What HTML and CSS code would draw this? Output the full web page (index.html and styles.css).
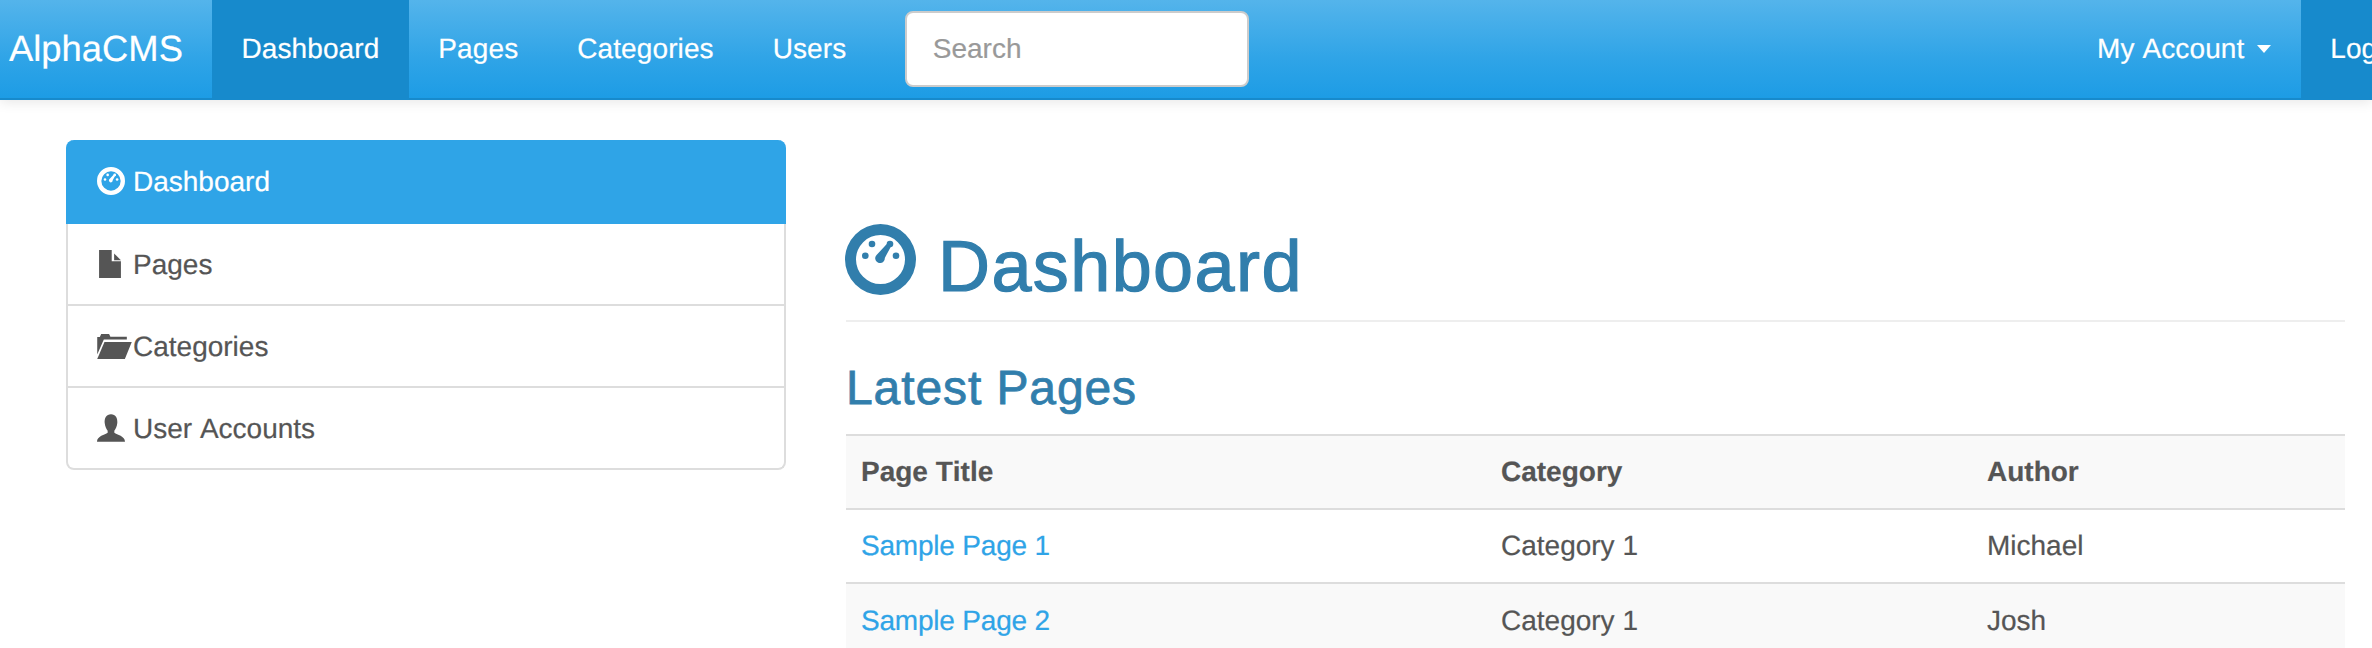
FILE: index.html
```html
<!DOCTYPE html>
<html lang="en">
<head>
    <meta charset="UTF-8">
    <title>AlphaCMS</title>
    <link rel="stylesheet" href="styles.css">
</head>
<body>

    <svg class="sprites" width="0" height="0">
        <symbol id="icon-dashboard" viewBox="0 0 71 71">
            <path fill-rule="evenodd" d="M35.5 0a35.5 35.5 0 1 0 0 71a35.5 35.5 0 1 0 0-71zM35.5 11a24.5 24.5 0 1 1 0 49a24.5 24.5 0 1 1 0-49z"/>
            <circle cx="27" cy="20" r="3.3"/>
            <circle cx="45" cy="20" r="3.3"/>
            <circle cx="20.3" cy="31.7" r="3.3"/>
            <circle cx="51" cy="31.7" r="3.3"/>
            <path d="M43.2 18.5l3.6 2.4l-7 13a4.8 4.8 0 1 1-8-3.2z"/>
        </symbol>
        <symbol id="icon-file" viewBox="0 0 64 82">
            <path d="M0 0H37V33H64V82H0Z"/>
            <path d="M44 10L64 30H44Z"/>
        </symbol>
        <symbol id="icon-folder" viewBox="0 0 105 76">
            <path d="M0 62V9H8L12 0H36L40 8H90V17H20Z"/>
            <path d="M22 24H105L84 76H0Z"/>
        </symbol>
        <symbol id="icon-user" viewBox="0 0 84 83">
            <path d="M42 0C56 0 62 12 61 26C60 38 55 46 52 50V56C60 62 84 66 84 83H0C0 66 24 62 32 56V50C29 46 24 38 23 26C22 12 28 0 42 0Z"/>
        </symbol>
    </svg>

    <nav class="navbar">
        <a class="brand" href="#">AlphaCMS</a>
        <a class="nav-link active" href="#">Dashboard</a>
        <a class="nav-link" href="#">Pages</a>
        <a class="nav-link" href="#">Categories</a>
        <a class="nav-link" href="#">Users</a>
        <input class="search" type="text" placeholder="Search">
        <div class="nav-right">
            <a class="nav-link" href="#">My Account <span class="caret"></span></a>
            <a class="nav-link active" href="#">Logout</a>
        </div>
    </nav>

    <div class="page">
        <aside class="sidebar">
            <a class="side-item active" href="#">
                <span class="side-icon"><svg class="ico-dash"><use href="#icon-dashboard"/></svg></span>Dashboard
            </a>
            <a class="side-item" href="#">
                <span class="side-icon"><svg class="ico-file"><use href="#icon-file"/></svg></span>Pages
            </a>
            <a class="side-item" href="#">
                <span class="side-icon"><svg class="ico-folder"><use href="#icon-folder"/></svg></span>Categories
            </a>
            <a class="side-item" href="#">
                <span class="side-icon"><svg class="ico-user"><use href="#icon-user"/></svg></span>User Accounts
            </a>
        </aside>

        <main class="content">
            <h1 class="page-title"><svg class="ico-title"><use href="#icon-dashboard"/></svg>Dashboard</h1>
            <h2 class="section-title">Latest Pages</h2>
            <table class="table">
                <thead>
                    <tr>
                        <th class="col-title">Page Title</th>
                        <th class="col-category">Category</th>
                        <th>Author</th>
                    </tr>
                </thead>
                <tbody>
                    <tr>
                        <td><a href="#">Sample Page 1</a></td>
                        <td>Category 1</td>
                        <td>Michael</td>
                    </tr>
                    <tr class="striped">
                        <td><a href="#">Sample Page 2</a></td>
                        <td>Category 1</td>
                        <td>Josh</td>
                    </tr>
                </tbody>
            </table>
        </main>
    </div>

</body>
</html>
```

FILE: styles.css
```css
html, body {
    margin: 0;
    height: 648px;
    overflow: hidden;
}
body {
    font-family: "Liberation Sans", Arial, sans-serif;
    font-size: 28px;
    font-kerning: none;
    text-rendering: geometricPrecision;
    -webkit-text-stroke: 0.2px;
    color: #555;
    background: #fff;
}
a {
    text-decoration: none;
    color: #2fa4e7;
}
.sprites {
    position: absolute;
}
svg {
    fill: currentColor;
    display: block;
}

/* navbar */
.navbar {
    display: flex;
    align-items: center;
    box-sizing: border-box;
    height: 100px;
    border-bottom: 2px solid #178acc;
    background: linear-gradient(#54b4eb, #2fa4e7 60%, #1d9ce5);
    box-shadow: 0 2px 12px rgba(0, 0, 0, 0.1);
}
.brand {
    flex-shrink: 0;
    padding: 0 29px 0 9px;
    font-size: 36.4px;
    color: #fff;
}
.nav-link {
    display: flex;
    align-items: center;
    flex-shrink: 0;
    height: 100px;
    padding: 0 29.5px;
    letter-spacing: 0.1px;
    color: #fff;
    white-space: pre;
}
.nav-link.active {
    background: #178acc;
}
.search {
    flex-shrink: 0;
    box-sizing: border-box;
    width: 344px;
    height: 76px;
    margin-left: 29px;
    padding: 0 26px;
    border: 2px solid #ccc;
    border-radius: 8px;
    background: #fff;
    font: inherit;
    color: #555;
}
.search::placeholder {
    color: #999;
}
.nav-right {
    display: flex;
    flex-shrink: 0;
    margin-left: auto;
    margin-right: -74px;
}
.caret {
    width: 0;
    height: 0;
    margin-left: 5px;
    border-top: 8px solid #fff;
    border-left: 7.5px solid transparent;
    border-right: 7.5px solid transparent;
}

/* page */
.page {
    display: flex;
    align-items: flex-start;
    gap: 60px;
    padding: 40px 27px 0 66px;
}
.sidebar {
    flex: 0 0 720px;
}
.side-item {
    display: flex;
    align-items: center;
    box-sizing: border-box;
    height: 82px;
    padding: 2px 0 0 29px;
    border: 2px solid #ddd;
    border-top: 0;
    color: #555;
}
.side-item:last-child {
    border-radius: 0 0 8px 8px;
}
.side-item.active {
    height: 84px;
    border-color: #2fa4e7;
    border-radius: 8px 8px 0 0;
    background: #2fa4e7;
    color: #fff;
}
.side-icon {
    display: flex;
    flex: 0 0 36px;
    margin-top: -2px;
}
.ico-dash {
    width: 28px;
    height: 28px;
}
.ico-file {
    width: 22px;
    height: 28px;
    margin-left: 2px;
}
.ico-folder {
    width: 35px;
    height: 25px;
}
.ico-user {
    width: 28px;
    height: 28px;
}

/* content */
.content {
    flex: 1;
    min-width: 0;
}
.page-title {
    display: flex;
    align-items: center;
    gap: 22px;
    height: 182px;
    box-sizing: border-box;
    margin: 0;
    padding-top: 74px;
    border-bottom: 2px solid #eee;
    font-size: 72px;
    font-weight: 400;
    letter-spacing: 1.4px;
    -webkit-text-stroke: 1.2px;
    color: #317eac;
}
.ico-title {
    width: 71px;
    height: 71px;
    margin: -15px 0 0 -1px;
}
.section-title {
    margin: 40px 0 18px;
    font-size: 48px;
    line-height: 54px;
    font-weight: 400;
    letter-spacing: 0.9px;
    -webkit-text-stroke: 0.8px;
    color: #317eac;
}
.table {
    width: 100%;
    border-collapse: collapse;
    table-layout: fixed;
}
.table th, .table td {
    height: 74px;
    box-sizing: border-box;
    padding: 0 15px;
    border-top: 2px solid #ddd;
    text-align: left;
}
.table a {
    letter-spacing: -0.2px;
}
.table thead tr, .striped {
    background: #f9f9f9;
}
.col-title {
    width: 640px;
}
.col-category {
    width: 486px;
}
```
